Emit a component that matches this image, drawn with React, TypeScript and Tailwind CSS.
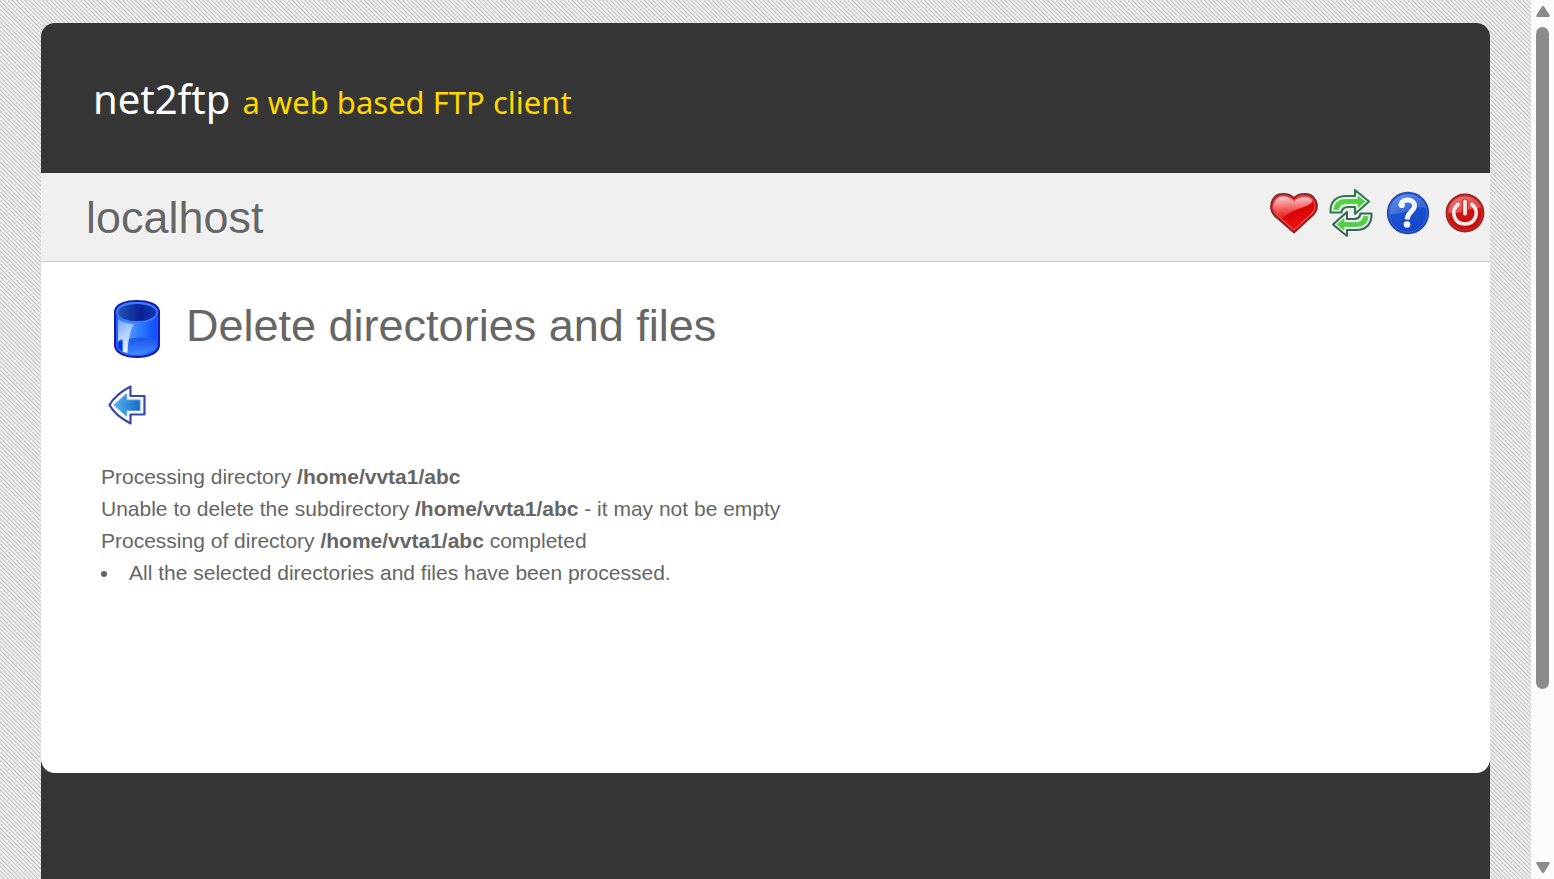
import React from "react";

function HeartIcon() {
  return (
    <svg viewBox="0 0 48 42" className="h-[42px] w-12" aria-hidden="true">
      <defs>
        <linearGradient id="heartFill" x1="0" y1="0" x2="0.4" y2="1">
          <stop offset="0" stopColor="#ff3a3a" />
          <stop offset="0.6" stopColor="#d80404" />
          <stop offset="1" stopColor="#f01515" />
        </linearGradient>
        <linearGradient id="heartShine" x1="0" y1="0" x2="0" y2="1">
          <stop offset="0" stopColor="#fff" stopOpacity="0.8" />
          <stop offset="1" stopColor="#ff5050" stopOpacity="0.35" />
        </linearGradient>
      </defs>
      <path d="M24 6C27 3 32 1.500 36.500 2C42.500 2.500 47 8 47 14.500C47 18 45.500 20.500 43 23L24 40.500L5 24C2.500 21.500 1 18.500 1 15C1 8 5.500 2 12 2C17 1.700 21 3 24 6Z" fill="url(#heartFill)" stroke="#7c2a2e" strokeWidth="1.800" />
      <path d="M24 8.500C27 5 32 3.500 36 4C41.500 4.500 45 9 45 14.500C45 17.500 43.500 20 41.500 22L24 38L7 23C4.500 20.500 3 18 3 15C3 9 7 4 12.500 4C17 4 21 5 24 8.500Z" fill="none" stroke="#f84640" strokeWidth="1.200" />
      <path d="M24 9.500C27 6 32 4.500 36 5C39 5.500 41.500 6.500 42.500 9C38 17 25 14 12 27L7 22C4.500 19.500 3.500 17.500 3.500 14.500C4 9 8 4.500 12.500 4.500C17 4.500 21 6 24 9.500Z" fill="url(#heartShine)" />
    </svg>
  );
}

function RefreshIcon() {
  return (
    <svg viewBox="0 0 44 48" className="h-12 w-11" aria-hidden="true">
      <g strokeLinejoin="round">
        <path d="M1.500 23.500C1 13 7 7 17 7H26V1L40 12.500L26 25V18H19C15 18 13 20 12.500 23.500Z" fill="#e6f6e2" stroke="#2c7850" strokeWidth="2" />
        <path d="M5 20.500C5.500 13.500 9.500 10.500 17 10.500H29V7L36 12.500L29 18.500V14.500H18C13 14.500 10.500 16.500 9.500 20.500Z" fill="#50d23c" stroke="#6cc873" strokeWidth="1" />
        <path d="M42.500 24.500C43 35 37 41 27 41H18V47L4 35.500L18 23V30H25C29 30 31 28 31.500 24.500Z" fill="#e6f6e2" stroke="#34645a" strokeWidth="2" />
        <path d="M39 27.500C38.500 34.500 34.500 37.500 27 37.500H15V41L8 35.500L15 29.500V33.500H26C31 33.500 33.500 31.500 34.500 27.500Z" fill="#50d23c" stroke="#6cc873" strokeWidth="1" />
      </g>
    </svg>
  );
}

function HelpIcon() {
  return (
    <svg viewBox="0 0 44 44" className="size-11" aria-hidden="true">
      <defs>
        <linearGradient id="helpFill" x1="0" y1="0" x2="0.500" y2="1">
          <stop offset="0" stopColor="#5c90f0" />
          <stop offset="0.500" stopColor="#1b52d0" />
          <stop offset="1" stopColor="#1646c8" />
        </linearGradient>
      </defs>
      <circle cx="22" cy="22" r="20.300" fill="url(#helpFill)" stroke="#2547b0" strokeWidth="1.700" />
      <circle cx="22" cy="22" r="19" fill="none" stroke="#3068de" strokeWidth="1" />
      <path d="M4 23C3 11 12 3.500 22 3.500C31 3.500 38 9 40 17C30 13 18 25 4 23Z" fill="#fff" fillOpacity="0.150" />
      <path d="M15 15C14.500 10.500 18 9 21.500 9C26 9 29 11.500 28.500 15.500C28 20 21.500 21 21 28.500" fill="none" stroke="#f5f8ff" strokeWidth="4.800" />
      <circle cx="15.800" cy="14" r="3.100" fill="#f5f8ff" />
      <circle cx="21" cy="33.500" r="3.300" fill="#f5f8ff" />
    </svg>
  );
}

function PowerIcon() {
  return (
    <svg viewBox="0 0 40 40" className="size-10" aria-hidden="true">
      <defs>
        <linearGradient id="powerFill" x1="0" y1="0" x2="0.500" y2="1">
          <stop offset="0" stopColor="#ef5a55" />
          <stop offset="0.450" stopColor="#d11512" />
          <stop offset="1" stopColor="#c80c0c" />
        </linearGradient>
      </defs>
      <circle cx="20" cy="20" r="18.500" fill="url(#powerFill)" stroke="#94282b" strokeWidth="1.800" />
      <circle cx="20" cy="20" r="17.200" fill="none" stroke="#d92d2a" strokeWidth="1" />
      <path d="M3.500 20C3.500 10 11 3.500 20 3.500C28 3.500 34 8 36 15C26 13 16 22 3.500 20Z" fill="#fff" fillOpacity="0.280" />
      <path d="M13 11.500C5 18 9 31 20 31C31 31 35 18 27 11.500" fill="none" stroke="#fbeaea" strokeWidth="3.600" strokeLinecap="round" />
      <path d="M20 8.500V20.500" stroke="#b52a2a" strokeWidth="5.600" strokeLinecap="round" />
      <path d="M20 8.500V20.500" stroke="#fbe4e4" strokeWidth="3.800" strokeLinecap="round" />
    </svg>
  );
}

function CylinderIcon() {
  return (
    <svg viewBox="0 0 46 58" className="h-[58px] w-[46px]" aria-hidden="true">
      <defs>
        <linearGradient id="binBody" x1="0" x2="1">
          <stop offset="0" stopColor="#1763ff" />
          <stop offset="0.300" stopColor="#4f98ff" />
          <stop offset="0.600" stopColor="#2c78ff" />
          <stop offset="1" stopColor="#0a45ff" />
        </linearGradient>
        <linearGradient id="binMouth" x1="0" x2="1">
          <stop offset="0" stopColor="#2455b8" />
          <stop offset="0.600" stopColor="#0a1f95" />
          <stop offset="1" stopColor="#1436b4" />
        </linearGradient>
        <linearGradient id="binBase" x1="0" y1="0" x2="0" y2="1">
          <stop offset="0" stopColor="#1a55ea" />
          <stop offset="1" stopColor="#3d8bff" />
        </linearGradient>
        <linearGradient id="binShine" x1="0" y1="0" x2="0" y2="1">
          <stop offset="0" stopColor="#fff" stopOpacity="0.350" />
          <stop offset="1" stopColor="#fff" stopOpacity="0.900" />
        </linearGradient>
      </defs>
      <path d="M1 11C2 4 12 1 23 1S44 4 45 11V46C44 53 35 57 23 57S2 53 1 46Z" fill="url(#binBody)" stroke="#1a1aae" strokeWidth="2" />
      <path d="M13 54V40C20 36.500 35 36.500 43 42V47C40 53 27 57 13 54Z" fill="url(#binBase)" />
      <path d="M4 19C9 23 14 24 20 24C16 31 14 41 13.500 53L9 52V40C7 38 5 40 4 43Z" fill="url(#binShine)" />
      <path d="M4 43C5 40 7 40 8 42V51L4 48Z" fill="#0b35dc" />
      <ellipse cx="23" cy="12.500" rx="20" ry="9.500" fill="url(#binMouth)" stroke="#3b7df8" strokeWidth="1.800" />
      <path d="M2.800 13V46C5 52 14 55.500 23 55.500S41 52 43.200 46V13" fill="none" stroke="#1d5cf5" strokeWidth="1" />
    </svg>
  );
}

function BackIcon() {
  return (
    <svg viewBox="0 0 38 40" className="h-10 w-[38px]" aria-hidden="true">
      <defs>
        <linearGradient id="backFill" x1="0" x2="1">
          <stop offset="0" stopColor="#55b5f2" />
          <stop offset="1" stopColor="#1769c8" />
        </linearGradient>
      </defs>
      <path d="M22.500 1.500V11H36.500V29.500H22.500V38.500C14 34 6 28.500 1.500 20C6 12 14 6 22.500 1.500Z" fill="#f6f8fd" stroke="#3c48a8" strokeWidth="2.200" strokeLinejoin="round" />
      <path d="M6 20L18.500 9V15H32V25.500H18.500V31Z" fill="url(#backFill)" stroke="#5a9fe0" strokeWidth="1" />
    </svg>
  );
}

function ScrollArrow({ d }: { d: string }) {
  return (
    <svg viewBox="0 0 14 11" className="h-[11px] w-3.5 fill-[#8b8b8b]" aria-hidden="true">
      <path d={d} />
    </svg>
  );
}

const actions = [
  { label: "Bookmark", icon: <HeartIcon /> },
  { label: "Refresh", icon: <RefreshIcon /> },
  { label: "Help", icon: <HelpIcon /> },
  { label: "Logout", icon: <PowerIcon /> },
];

export default function App() {
  return (
    <div className="flex h-screen overflow-hidden font-['Liberation_Sans',Arial,sans-serif] text-[21px] leading-8 text-[#666]">
      <div className="flex min-w-0 flex-1 flex-col bg-[repeating-linear-gradient(45deg,#c4c4c4_0px,#eeeeee_1px,#eeeeee_2px,#c4c4c4_3px)] px-[41px] pt-[23px]">
        <div className="flex flex-1 flex-col rounded-t-[14px] bg-[#363636]">
          <header className="flex h-[150px] shrink-0 items-center px-[52px] pt-0.5">
            <a href="#" className="flex items-baseline gap-3 font-['Noto_Sans',sans-serif]">
              <span className="text-[40px] leading-none text-white">net2ftp</span>
              <span className="text-[31px] leading-none text-[#ffd800]">a web based FTP client</span>
            </a>
          </header>
          <main className="flex h-[600px] shrink-0 flex-col overflow-hidden rounded-b-[14px] bg-white">
            <div className="flex h-[89px] shrink-0 items-center justify-between border-b border-[#ccc] bg-[#f0f0f0] pl-[45px]">
              <h1 className="text-[45px] leading-none text-shadow-[1px_1px_0_#fff]">localhost</h1>
              <nav className="mb-2 flex gap-[9px] pr-px">
                {actions.map((action) => (
                  <button key={action.label} type="button" aria-label={action.label} className="flex size-12 items-center justify-center">
                    {action.icon}
                  </button>
                ))}
              </nav>
            </div>
            <div className="px-[60px] pt-[38px]">
              <div className="flex items-center gap-[26px] pl-[13px]">
                <CylinderIcon />
                <h2 className="pb-2 text-[45px] leading-none">Delete directories and files</h2>
              </div>
              <a href="#" aria-label="Back" className="mt-[27px] ml-[7px] block w-[38px]">
                <BackIcon />
              </a>
              <div className="mt-9">
                <p>Processing directory <b>/home/vvta1/abc</b></p>
                <p>Unable to delete the subdirectory <b>/home/vvta1/abc</b> - it may not be empty</p>
                <p>Processing of directory <b>/home/vvta1/abc</b> completed</p>
                <ul className="list-inside list-disc">
                  <li>All the selected directories and files have been processed.</li>
                </ul>
              </div>
            </div>
          </main>
          <footer className="flex-1" />
        </div>
      </div>
      <div className="flex w-[23px] shrink-0 flex-col items-center bg-[#fcfcfc] py-1.5" aria-hidden="true">
        <ScrollArrow d="M7 0C7.600 0 8 .4 8.400 1L13.500 9C14.200 10.200 13.500 11 12.500 11H1.500C.5 11-.2 10.200.5 9L5.600 1C6 .4 6.400 0 7 0Z" />
        <div className="mt-2.5 flex flex-1 flex-col pb-[173px]">
          <div className="w-[13px] flex-1 rounded-full bg-[#8b8b8b]" />
        </div>
        <ScrollArrow d="M7 11C7.600 11 8 10.600 8.400 10L13.500 2C14.200.8 13.500 0 12.500 0H1.500C.5 0-.2.8.5 2L5.600 10C6 10.600 6.400 11 7 11Z" />
      </div>
    </div>
  );
}
